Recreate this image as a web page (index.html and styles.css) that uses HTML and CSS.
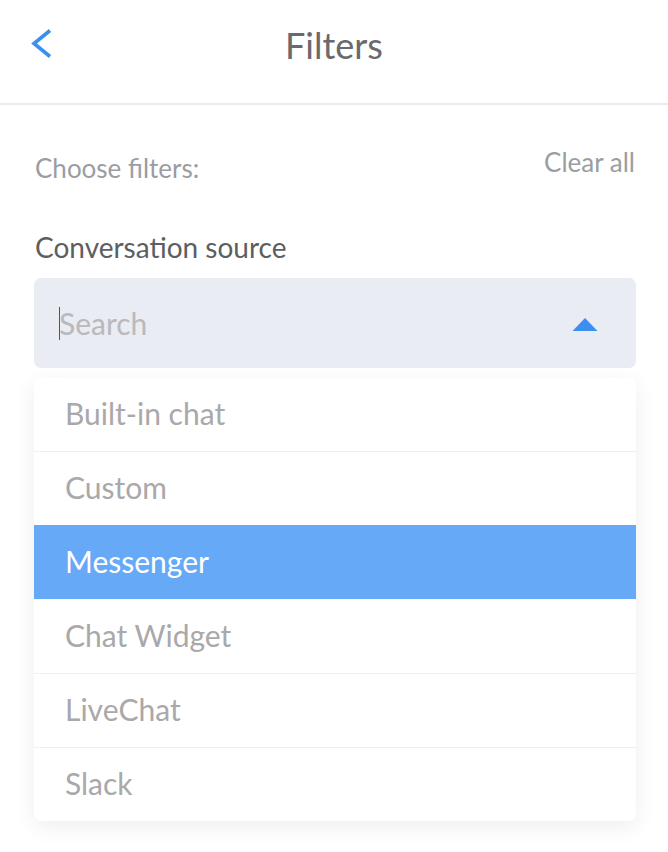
FILE: index.html
```html
<!DOCTYPE html>
<html>
<head>
<meta charset="utf-8">
<link rel="stylesheet" href="styles.css">
</head>
<body>
<header class="header">
  <svg class="back" width="22" height="32" viewBox="0 0 22 32"><path d="M19 2.5 L3 15.5 L19 28.5" fill="none" stroke="#3d8fef" stroke-width="3.6" stroke-linecap="butt" stroke-linejoin="miter"/></svg>
  <h1 class="title">Filters</h1>
</header>
<main class="content">
  <div class="top-row">
    <span class="choose">Choose filters:</span>
    <span class="clear">Clear all</span>
  </div>
  <div class="label">Conversation source</div>
  <div class="search">
    <span class="caret"></span><span class="placeholder">Search</span>
    <svg class="tri" width="26" height="13" viewBox="0 0 26 13"><path d="M13 0 L25.5 13 L0.5 13 Z" fill="#3d8fef"/></svg>
  </div>
  <ul class="dropdown">
    <li class="opt">Built-in chat</li>
    <li class="opt">Custom</li>
    <li class="opt selected">Messenger</li>
    <li class="opt">Chat Widget</li>
    <li class="opt">LiveChat</li>
    <li class="opt">Slack</li>
  </ul>
</main>
</body>
</html>
```
FILE: styles.css
```css
* { box-sizing: border-box; }
html, body { margin: 0; padding: 0; background: #fff; }
body { font-family: "Lato", "Noto Sans", sans-serif; width: 668px; height: 852px; overflow: hidden; }
.header { height: 105px; border-bottom: 2px solid #e8ebef; display: flex; align-items: center; justify-content: center; position: relative; }
.back { position: absolute; left: 31px; top: 28px; }
.title { margin: 0; font-weight: 400; font-size: 36px; color: #6a696e; position: relative; top: -7px; left: 0; }
.content { padding: 0 32px 0 34px; }
.top-row { display: flex; justify-content: space-between; align-items: flex-start; padding-top: 41px; height: 125px; }
.choose { font-size: 26px; line-height: 32px; color: #9a9da3; margin-top: 6px; margin-left: 1px; }
.clear { font-size: 26px; line-height: 32px; color: #9a9da3; margin-right: 1px; }
.label { font-size: 28px; line-height: 34px; height: 34px; color: #5d5e62; margin-left: 1px; }
.search { height: 90px; margin-top: 14px; background: #e9ecf3; border-radius: 7px; display: flex; align-items: center; padding-left: 25px; padding-right: 38px; }
.caret { width: 1px; height: 33px; background: #555; margin-right: -1px; }
.placeholder { font-size: 30px; color: #b9b9bc; flex: 1; }
.tri { margin-top: 2px; }
.dropdown { list-style: none; margin: 10px 0 0; padding: 0; background: #fff; border-radius: 7px; box-shadow: 0 6px 22px rgba(0,0,0,0.07); overflow: hidden; }
.opt { height: 74px; display: flex; align-items: center; padding-left: 31px; padding-bottom: 3px; font-size: 30px; color: #a9a8aa; border-top: 1px solid #efefef; }
.opt:first-child { border-top: none; height: 73px; }
.opt.selected { background: #66a9f7; color: #fff; border-top: none; padding-bottom: 2px; }
.opt.selected + .opt { border-top: none; }
```
